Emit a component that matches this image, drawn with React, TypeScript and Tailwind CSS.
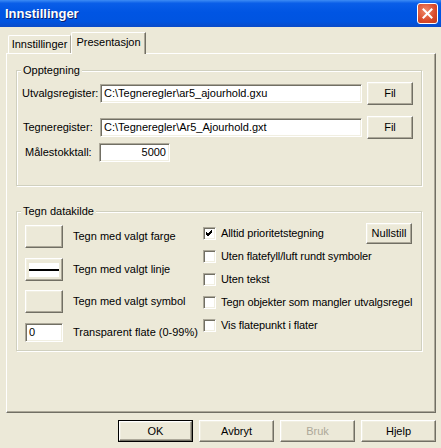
// Innstillinger — XP-style settings dialog, "Presentasjon" tab.
import type { ReactNode } from 'react'

const raised =
  'border border-t-white border-l-white border-r-[#716F64] border-b-[#716F64] shadow-[inset_-1px_-1px_0_#ACA899,inset_1px_1px_0_#F1EFE2] bg-[#ECE9D8]'
const sunken =
  'border border-t-[#ACA899] border-l-[#ACA899] border-r-white border-b-white shadow-[inset_1px_1px_0_#716F64,inset_-1px_-1px_0_#F1EFE2] bg-white'

function Btn({ children, className = '', disabled = false }: { children?: ReactNode; className?: string; disabled?: boolean }) {
  return (
    <div className={`${raised} flex items-center justify-center ${disabled ? 'text-[#ACA899]' : 'text-black'} ${className}`}>
      {children}
    </div>
  )
}

function Field({ value, className = '', right = false }: { value: string; className?: string; right?: boolean }) {
  return (
    <div className={`${sunken} flex items-center h-[19px] whitespace-nowrap overflow-hidden ${right ? 'justify-end pr-[3px]' : 'pl-[3px]'} ${className}`}>
      {value}
    </div>
  )
}

function Group({ label, className = '', children }: { label: string; className?: string; children: ReactNode }) {
  return (
    <div className={`relative border border-[#D0D0BF] shadow-[1px_1px_0_#fff,inset_1px_1px_0_#fff] ${className}`}>
      <span className="absolute -top-[8px] left-[4px] px-[2px] bg-[#ECE9D8] leading-[14px]">{label}</span>
      {children}
    </div>
  )
}

function Check({ checked = false, label }: { checked?: boolean; label: string }) {
  return (
    <div className="flex items-center h-[23px] whitespace-nowrap">
      <div className={`${sunken} w-[13px] h-[13px] shrink-0 flex items-center justify-center`}>
        {checked && (
          <svg width="7" height="7" viewBox="0 0 7 7">
            <path d="M0 3 L2 5 L6 1 M0 4 L2 6 L6 2 M0 2 L2 4 L6 0" stroke="#000" strokeWidth="1" fill="none" />
          </svg>
        )}
      </div>
      <span className="ml-[5px] tracking-[-0.1px]">{label}</span>
    </div>
  )
}

export default function App() {
  return (
    <div className="w-[441px] h-[448px] bg-[#ECE9D8] text-[11px] leading-[13px] text-black overflow-hidden" style={{ fontFamily: '"Liberation Sans", Arial, sans-serif' }}>
      {/* title bar */}
      <div className="h-[27px] flex items-center justify-between pl-[5px] pr-[3px] bg-[linear-gradient(to_bottom,#3d8cf5_0%,#0a5ee8_12%,#0055e3_45%,#0054e0_80%,#0a4bc8_100%)]">
        <span className="text-white font-bold text-[13px] [text-shadow:1px_1px_0_#0a1f6e]">Innstillinger</span>
        <div className="w-[21px] h-[21px] rounded-[3px] border border-white bg-[radial-gradient(circle_at_40%_35%,#f08a6a,#d9492a_60%,#c03a1c)] flex items-center justify-center">
          <svg width="11" height="11" viewBox="0 0 11 11">
            <path d="M1.5 1.5 L9.5 9.5 M9.5 1.5 L1.5 9.5" stroke="#fff" strokeWidth="2" strokeLinecap="square" />
          </svg>
        </div>
      </div>

      <div className="pl-[6px] pt-[6px]">
        {/* tabs */}
        <div className="flex items-end h-[20px] pl-[2px]">
          <div className="h-[18px] w-[63px] border-t border-l border-white border-r border-r-[#ACA899] flex items-center justify-center rounded-tl-[2px]">
            Innstillinger
          </div>
          <div className="relative z-10 -mb-[1px] h-[22px] w-[75px] bg-[#ECE9D8] border-t border-l border-white border-r border-r-[#716F64] shadow-[inset_-1px_0_0_#ACA899] flex items-center justify-center pb-[2px] rounded-tl-[2px]">
            Presentasjon
          </div>
        </div>

        {/* panel */}
        <div className="w-[430px] h-[360px] border border-t-white border-l-white border-r-[#716F64] border-b-[#716F64] shadow-[inset_-1px_-1px_0_#ACA899] pl-[9px] pt-[16px]">
          <Group label="Opptegning" className="w-[406px] h-[116px] pt-[11px]">
            <div className="flex items-center h-[23px]">
              <span className="w-[83px] pl-[5px]">Utvalgsregister:</span>
              <Field value="C:\Tegneregler\ar5_ajourhold.gxu" className="w-[262px]" />
              <Btn className="ml-[5px] w-[46px] h-[23px]">Fil</Btn>
            </div>
            <div className="flex items-center h-[23px] mt-[11px]">
              <span className="w-[83px] pl-[6px]">Tegneregister:</span>
              <Field value="C:\Tegneregler\Ar5_Ajourhold.gxt" className="w-[262px]" />
              <Btn className="ml-[5px] w-[46px] h-[23px]">Fil</Btn>
            </div>
            <div className="flex items-center h-[19px] mt-[4px]">
              <span className="w-[82px] pl-[8px]">Målestokktall:</span>
              <Field value="5000" right className="w-[71px]" />
            </div>
          </Group>

          <Group label="Tegn datakilde" className="mt-[25px] w-[406px] h-[140px] flex">
            <div className="w-[186px] shrink-0 pl-[8px] pt-[13px] flex flex-col whitespace-nowrap">
              <div className="flex items-center h-[23px]">
                <Btn className="w-[38px] h-[23px]" />
                <span className="ml-[10px]">Tegn med valgt farge</span>
              </div>
              <div className="flex items-center h-[23px] mt-[10px]">
                <Btn className="w-[38px] h-[23px] px-[3px]">
                  <div className="w-full h-[14px] bg-white flex items-center">
                    <div className="w-full h-[2px] bg-black" />
                  </div>
                </Btn>
                <span className="ml-[10px]">Tegn med valgt linje</span>
              </div>
              <div className="flex items-center h-[23px] mt-[9px]">
                <Btn className="w-[38px] h-[23px]" />
                <span className="ml-[10px]">Tegn med valgt symbol</span>
              </div>
              <div className="flex items-center h-[23px] mt-[8px]">
                <Field value="0" className="w-[38px]" />
                <span className="ml-[10px]">Transparent flate (0-99%)</span>
              </div>
            </div>
            <div className="flex-1 min-w-0 pt-[10px] pr-[9px]">
              <div className="flex items-center">
                <Check checked label="Alltid prioritetstegning" />
                <Btn className="ml-auto w-[46px] h-[21px]">Nullstill</Btn>
              </div>
              <Check label="Uten flatefyll/luft rundt symboler" />
              <Check label="Uten tekst" />
              <Check label="Tegn objekter som mangler utvalgsregel" />
              <Check label="Vis flatepunkt i flater" />
            </div>
          </Group>
        </div>

        {/* dialog buttons */}
        <div className="flex justify-end gap-[6px] w-[430px] mt-[7px]">
          <div className="border border-black">
            <Btn className="w-[73px] h-[20px]">OK</Btn>
          </div>
          <Btn className="w-[75px] h-[22px]">Avbryt</Btn>
          <Btn disabled className="w-[75px] h-[22px]">Bruk</Btn>
          <Btn className="w-[75px] h-[22px]">Hjelp</Btn>
        </div>
      </div>
    </div>
  )
}
